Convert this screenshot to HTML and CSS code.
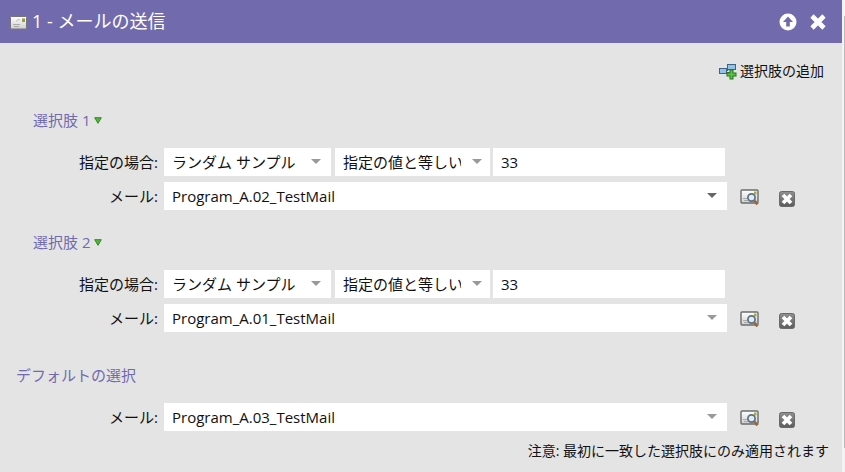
FILE: index.html
```
<!DOCTYPE html>
<html lang="ja">
<head>
    <meta charset="UTF-8">
    <title>メールの送信</title>
    <link rel="stylesheet" href="styles.css">
</head>
<body>
    <!-- 共通アイコン -->
    <svg class="defs" width="0" height="0">
        <defs>
            <linearGradient id="card" x1="0" y1="0" x2="0" y2="1">
                <stop offset="0" stop-color="#ffffff"/>
                <stop offset="1" stop-color="#cfcfcf"/>
            </linearGradient>
            <linearGradient id="dark" x1="0" y1="0" x2="0" y2="1">
                <stop offset="0" stop-color="#909090"/>
                <stop offset="1" stop-color="#5c5c5c"/>
            </linearGradient>
        </defs>
        <symbol id="icon-preview" viewBox="0 0 19 17">
            <rect x="1" y="1" width="17" height="13" rx="1" fill="url(#card)" stroke="#6c6c6c" stroke-width="1.4"/>
            <path d="M3 9.500h5M4 11.500h4" stroke="#aaa"/>
            <rect x="14" y="2.500" width="2.500" height="3" fill="#a5a83c"/>
            <circle cx="11.500" cy="8.500" r="3.600" fill="#dcecf8" stroke="#5f6f80" stroke-width="1.700"/>
            <path d="M14.300 11.500l3.200 3.800" stroke="#94683c" stroke-width="2.700"/>
        </symbol>
        <symbol id="icon-remove" viewBox="0 0 16 16">
            <rect x="0.500" y="0.500" width="15" height="15" rx="2" fill="url(#dark)" stroke="#6a6a6a"/>
            <path d="M4 4l8 8M12 4l-8 8" stroke="#fff" stroke-width="3.800"/>
        </symbol>
    </svg>

    <div class="panel">
        <header class="header">
            <svg class="header-icon" width="17" height="14" viewBox="0 0 17 14">
                <rect x="0.500" y="0.500" width="16" height="12.500" rx="1" fill="url(#card)" stroke="#77747c"/>
                <path d="M3 8.500h7M4 10.500h5" stroke="#aaa"/>
                <path d="M6 5.500q2-3 4-1.500" fill="none" stroke="#bbb"/>
                <rect x="12" y="2.500" width="3" height="3.500" fill="#95a03a"/>
            </svg>
            <h1 class="header-title">1 - メールの送信</h1>
            <button class="icon-btn" type="button" aria-label="上へ">
                <svg width="18" height="18" viewBox="0 0 18 18">
                    <circle cx="9" cy="9" r="8.500" fill="#fff"/>
                    <path d="M9 3.500l5 5.500h-3.200v4.500h-3.600v-4.500h-3.200z" fill="#716bae"/>
                </svg>
            </button>
            <button class="icon-btn close" type="button" aria-label="閉じる">
                <svg width="16" height="16" viewBox="0 0 16 16">
                    <path d="M2 2l12 12M14 2l-12 12" stroke="#fff" stroke-width="4.600"/>
                </svg>
            </button>
        </header>

        <div class="toolbar">
            <button class="add-btn" type="button">
                <svg width="18" height="17" viewBox="0 0 18 17">
                    <path d="M7 7.500h2v-4h1" fill="none" stroke="#555"/>
                    <rect x="0.500" y="5.500" width="7" height="5" fill="#8fc4e8" stroke="#3f6483"/>
                    <rect x="8.500" y="1.500" width="8" height="5" fill="#8fc4e8" stroke="#3f6483"/>
                    <path d="M7.500 9.500h3" stroke="#555"/>
                    <path d="M12.500 6.500v10M7.500 11.500h10" stroke="#1f7a1c" stroke-width="4"/>
                    <path d="M12.500 7.500v8M8.500 11.500h8" stroke="#62c043" stroke-width="2"/>
                </svg>
                選択肢の追加
            </button>
        </div>

        <section class="choice">
            <h2 class="choice-title">選択肢 1
                <svg width="8" height="7" viewBox="0 0 8 7"><path d="M0.700 0.700h6.600l-3.300 5.600z" fill="#55b73a" stroke="#2f8a22"/></svg>
            </h2>
            <div class="row">
                <label class="label" for="cond1">指定の場合:</label>
                <span class="select cond"><select id="cond1"><option>ランダム サンプル</option></select></span>
                <span class="select oper"><select aria-label="演算子"><option>指定の値と等しい</option></select></span>
                <input class="value" type="text" value="33" aria-label="値">
            </div>
            <div class="row">
                <label class="label" for="mail1">メール:</label>
                <span class="select mail active"><select id="mail1"><option>Program_A.02_TestMail</option></select></span>
                <button class="icon-btn preview" type="button" aria-label="プレビュー"><svg width="19" height="17"><use href="#icon-preview"/></svg></button>
                <button class="icon-btn remove" type="button" aria-label="削除"><svg width="16" height="16"><use href="#icon-remove"/></svg></button>
            </div>
        </section>

        <section class="choice">
            <h2 class="choice-title">選択肢 2
                <svg width="8" height="7" viewBox="0 0 8 7"><path d="M0.700 0.700h6.600l-3.300 5.600z" fill="#55b73a" stroke="#2f8a22"/></svg>
            </h2>
            <div class="row">
                <label class="label" for="cond2">指定の場合:</label>
                <span class="select cond"><select id="cond2"><option>ランダム サンプル</option></select></span>
                <span class="select oper"><select aria-label="演算子"><option>指定の値と等しい</option></select></span>
                <input class="value" type="text" value="33" aria-label="値">
            </div>
            <div class="row">
                <label class="label" for="mail2">メール:</label>
                <span class="select mail"><select id="mail2"><option>Program_A.01_TestMail</option></select></span>
                <button class="icon-btn preview" type="button" aria-label="プレビュー"><svg width="19" height="17"><use href="#icon-preview"/></svg></button>
                <button class="icon-btn remove" type="button" aria-label="削除"><svg width="16" height="16"><use href="#icon-remove"/></svg></button>
            </div>
        </section>

        <section class="choice default">
            <h2 class="choice-title">デフォルトの選択</h2>
            <div class="row">
                <label class="label" for="mail3">メール:</label>
                <span class="select mail"><select id="mail3"><option>Program_A.03_TestMail</option></select></span>
                <button class="icon-btn preview" type="button" aria-label="プレビュー"><svg width="19" height="17"><use href="#icon-preview"/></svg></button>
                <button class="icon-btn remove" type="button" aria-label="削除"><svg width="16" height="16"><use href="#icon-remove"/></svg></button>
            </div>
        </section>

        <p class="note">注意: 最初に一致した選択肢にのみ適用されます</p>
    </div>
    <div class="edge"></div>
</body>
</html>
```

FILE: styles.css
```
* {
    margin: 0;
    padding: 0;
    box-sizing: border-box;
}
body {
    display: flex;
    min-height: 100vh;
    background: #f4f4f4;
    color: #111;
    font: 15px/20px "Open Sans", "Noto Sans CJK JP", sans-serif;
}
button, input, select {
    border: 0;
    border-radius: 0;
    background: none;
    color: inherit;
    font: inherit;
}
svg {
    display: block;
}
.defs {
    position: absolute;
}
.panel {
    flex: 1;
    background: #e4e4e4;
}
/* スクロールバー */
.edge {
    width: 3px;
    margin: 16px 0 24px;
    border-right: 1px solid #bbb;
}
.header {
    display: flex;
    align-items: center;
    height: 43px;
    padding: 0 16px 0 10px;
    background: #716bae;
    color: #fff;
}
.header-icon {
    margin-top: 3px;
}
.header-title {
    flex: 1;
    margin-left: 5px;
    padding-bottom: 2px;
    font-size: 18px;
    font-weight: 400;
    line-height: 24px;
}
.icon-btn {
    flex: none;
    cursor: pointer;
}
.close {
    margin-left: 13px;
}
.toolbar {
    display: flex;
    justify-content: flex-end;
    padding: 18px 18px 0;
}
.add-btn {
    display: flex;
    align-items: center;
    gap: 3px;
    font-size: 14px;
    cursor: pointer;
}
.choice {
    padding: 0 47px 0 33px;
    margin-top: 22px;
}
.toolbar + .choice {
    margin-top: 29px;
}
.choice-title {
    display: flex;
    align-items: center;
    gap: 4px;
    margin-bottom: 18px;
    color: #716bae;
    font-size: 15px;
    font-weight: 400;
}
.row {
    display: flex;
    align-items: center;
    height: 28px;
    margin-bottom: 6px;
}
.label {
    flex: none;
    width: 125px;
    margin-right: 6px;
    text-align: right;
}
.select {
    position: relative;
    height: 28px;
    background: #fff;
}
.select select {
    display: block;
    width: 100%;
    height: 28px;
    padding: 0 29px 0 8px;
    appearance: none;
}
.select::after {
    content: "";
    position: absolute;
    top: 11px;
    right: 10px;
    border: 5px solid transparent;
    border-top-color: #999;
    border-bottom: 0;
    pointer-events: none;
}
.active::after {
    border-top-color: #666;
}
.cond {
    width: 167px;
}
.oper {
    width: 155px;
    margin: 0 3px 0 4px;
}
.oper::after {
    right: 8px;
}
.value {
    flex: 1;
    min-width: 0;
    height: 28px;
    margin-right: 70px;
    padding: 0 8px;
    background: #fff;
}
.mail {
    flex: 1;
}
.preview {
    margin: 2px 0 0 13px;
}
.remove {
    margin: 6px 0 0 20px;
}
.default {
    margin-top: 33px;
}
.default .choice-title {
    margin-left: -17px;
}
.note {
    padding: 4px 13px 0;
    font-size: 14px;
    text-align: right;
}
```
